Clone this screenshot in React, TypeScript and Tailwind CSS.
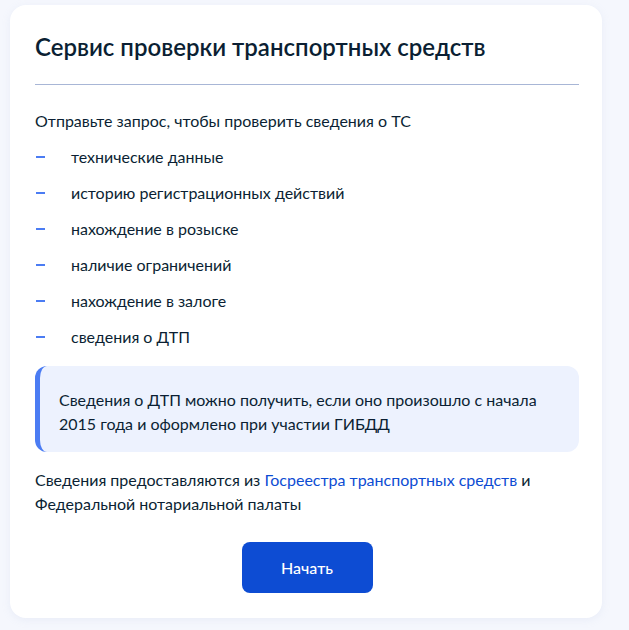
const items = [
  "технические данные",
  "историю регистрационных действий",
  "нахождение в розыске",
  "наличие ограничений",
  "нахождение в залоге",
  "сведения о ДТП",
];

export default function App() {
  return (
    <div
      className="min-h-[630px] bg-[#f5f7fd] pt-[5px] pl-[10px] pr-[27px] pb-[12px] text-[#0b1f33]"
      style={{ fontFamily: "Lato, 'Noto Sans', sans-serif" }}
    >
      <div className="rounded-2xl bg-white pl-[25px] pr-[23px] pt-[26px] pb-[25px] shadow-[0_2px_8px_rgba(166,182,214,0.15)]">
        <h1 className="text-[24px] leading-[32px] font-semibold">
          Сервис проверки транспортных средств
        </h1>
        <div className="mt-[21px] h-px bg-[#a8b6d6]" />
        <p className="mt-[24px] text-[16px] leading-[24px]">
          Отправьте запрос, чтобы проверить сведения о ТС
        </p>
        <ul className="mt-[12px] flex flex-col gap-[12px]">
          {items.map((t) => (
            <li key={t} className="flex items-center text-[16px] leading-[24px]">
              <span className="ml-[1px] mr-[26px] h-[2px] w-[9px] bg-[#4b7cf3]" />
              {t}
            </li>
          ))}
        </ul>
        <div className="mt-[17px] rounded-xl border-l-[5px] border-[#4b7cf3] bg-[#edf2fe] pt-[22px] pb-[16px] pl-[19px] pr-[20px] text-[16px] leading-[24px]">
          Сведения о ДТП можно получить, если оно произошло с начала
          <br />
          2015 года и оформлено при участии ГИБДД
        </div>
        <p className="mt-[16px] text-[16px] leading-[24px]">
          Сведения предоставляются из{" "}
          <a className="text-[#0d4cd3]" href="#">
            Госреестра транспортных средств
          </a>{" "}
          и
          <br />
          Федеральной нотариальной палаты
        </p>
        <div className="mt-[26px] flex justify-center">
          <button className="h-[51px] w-[131px] rounded-lg bg-[#0d4cd3] text-[16px] font-medium text-white">
            Начать
          </button>
        </div>
      </div>
    </div>
  );
}
